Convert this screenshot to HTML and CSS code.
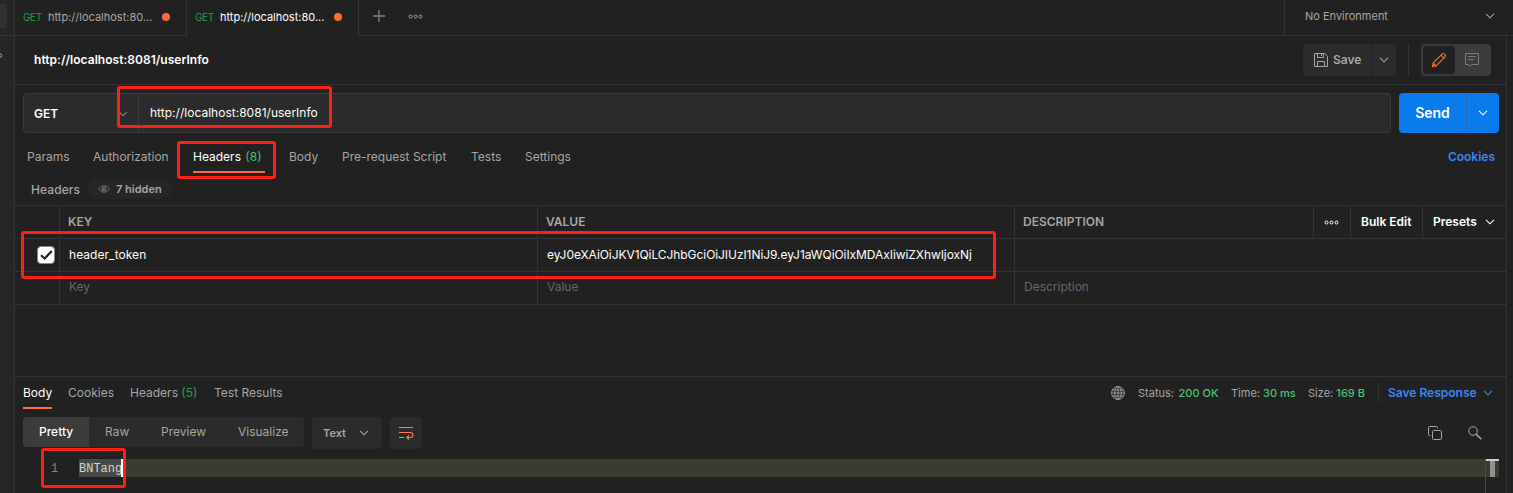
FILE: index.html
```
<!DOCTYPE html>
<html lang="en">
<head>
<meta charset="utf-8">
<title>userInfo request</title>
<link rel="stylesheet" href="styles.css">
</head>
<body>
<svg class="defs" width="0" height="0">
  <symbol id="chevron" viewBox="0 0 10 6"><path d="M1 .8 5 4.8 9 .8" fill="none" stroke="currentColor" stroke-width="1.1"/></symbol>
  <symbol id="dots" viewBox="0 0 15 5"><g fill="none" stroke="currentColor"><circle cx="2.5" cy="2.5" r="1.5"/><circle cx="7.5" cy="2.5" r="1.5"/><circle cx="12.5" cy="2.5" r="1.5"/></g></symbol>
</svg>
<div class="app">
  <aside class="rail"><div class="rail-top"><div class="rail-button"></div></div><svg class="rail-dot" width="3" height="5" viewBox="0 0 3 5"><circle cx="0" cy="2.5" r="1.7" fill="none" stroke="#a6a6a6"/></svg></aside>
  <header class="topbar">
    <div class="file-tab"><span class="verb">GET</span><span class="file-name">http://localhost:80...</span><i class="unsaved"></i></div>
    <div class="file-tab active"><span class="verb">GET</span><span class="file-name">http://localhost:80...</span><i class="unsaved"></i></div>
    <div class="tab-tools">
      <svg width="12" height="12" viewBox="0 0 12 12"><path d="M6 0v12M0 6h12" stroke="#858585" stroke-width="1.3"/></svg>
      <svg class="more" width="15" height="5"><use href="#dots"/></svg>
    </div>
    <div class="environment"><span>No Environment</span><svg width="10" height="6"><use href="#chevron"/></svg></div>
  </header>
  <main class="workspace">
    <section class="title-row">
      <h1 class="title">http://localhost:8081/userInfo</h1>
      <div class="save"><svg width="14" height="14" viewBox="0 0 14 14" fill="none" stroke="currentColor"><path d="M.5.5h10.2l2.8 2.8v10.2H.5zM3.5.5v4h6v-4M7.5 1v2M3.5 13.5v-5h7v5"/></svg><span class="save-label">Save</span></div>
      <div class="save-menu"><svg width="10" height="6"><use href="#chevron"/></svg></div>
      <div class="rule"></div>
      <div class="mode">
        <div class="mode-edit"><svg width="14" height="14" viewBox="0 0 14 14" fill="none" stroke="#ff6c37" stroke-width="1.1"><path d="M.5 13.5 1.1 10 10.2.9Q11.6 0 12.8 1.2 14 2.4 13.1 3.8L4 12.9ZM9 2.1 11.9 5M1.1 10 4 12.9"/></svg></div>
        <div class="mode-comment"><svg width="14" height="14" viewBox="0 0 14 14" fill="none" stroke="#7a7a7a"><path d="M.5.5h13v11H6.5L5 13.2 3.5 11.5H.5zM3 3.5h8M3 6.5h6"/></svg></div>
      </div>
    </section>
    <section class="url-row">
      <div class="url-box">
        <div class="method"><span>GET</span><svg width="10" height="6"><use href="#chevron"/></svg></div>
        <div class="url">http://localhost:8081/userInfo</div>
      </div>
      <div class="send"><div class="send-label"><span>Send</span></div><div class="send-menu"><svg width="10" height="6"><use href="#chevron"/></svg></div></div>
    </section>
    <nav class="request-tabs">
      <span class="t-params">Params</span><span class="t-auth">Authorization</span><span class="t-headers active">Headers <b class="count">(8)</b></span><span class="t-body">Body</span><span class="t-pre">Pre-request Script</span><span class="t-tests">Tests</span><span class="t-settings">Settings</span>
      <span class="cookies">Cookies</span>
    </nav>
    <div class="headers-row"><span class="headers-label">Headers</span>
      <div class="hidden-pill"><svg width="12" height="8" viewBox="0 0 12 8"><path d="M.4 4Q3 .6 6 .6T11.6 4Q9 7.4 6 7.4T.4 4Z" fill="none" stroke="#6b6b6b"/><circle cx="6" cy="4" r="2.5" fill="#6b6b6b"/><path d="M6 2.5V4h1.5" fill="none" stroke="#262626" stroke-width=".8"/></svg><span>7 hidden</span></div>
    </div>
    <div class="table">
      <div class="row head"><div></div><div>KEY</div><div>VALUE</div><div class="description"><span>DESCRIPTION</span></div><div class="head-tool"><svg width="15" height="5"><use href="#dots"/></svg></div><div class="head-tool">Bulk Edit</div><div class="head-tool presets"><span>Presets</span><svg width="10" height="6"><use href="#chevron"/></svg></div></div>
      <div class="row filled"><div class="check-cell"><span class="checkbox"><svg width="13" height="10" viewBox="0 0 13 10"><path d="M1 5.2 4.7 8.5 11.8 1" fill="none" stroke="#212121" stroke-width="2.2"/></svg></span></div><div><span class="key-text">header_token</span></div><div><span class="token">eyJ0eXAiOiJKV1QiLCJhbGciOiJIUzI1NiJ9.eyJ1aWQiOiIxMDAxIiwiZXhwIjoxNj</span></div><div></div></div>
      <div class="row blank"><div></div><div>Key</div><div>Value</div><div>Description</div></div>
    </div>
    <section class="response">
      <div class="response-bar">
        <span class="r-body active">Body</span><span class="r-cookies">Cookies</span><span class="r-headers">Headers <b class="count">(5)</b></span><span class="r-tests">Test Results</span>
        <div class="meta">
          <svg class="globe" width="14" height="14" viewBox="0 0 14 14" fill="none" stroke="#a6a6a6" stroke-width=".9"><circle cx="7" cy="7" r="6.4"/><ellipse cx="7" cy="7" rx="3.3" ry="6.4"/><path d="M7 .6v12.8M1.4 4h11.2M.6 7h12.8M1.4 10h11.2"/></svg>
          <span class="m-status">Status: <em>200 OK</em></span><span class="m-time">Time: <em>30 ms</em></span><span class="m-size">Size: <em>169 B</em></span>
          <div class="save-response"><span>Save Response</span><svg width="10" height="6"><use href="#chevron"/></svg></div>
        </div>
      </div>
      <div class="format-bar">
        <div class="segments"><span class="segment s-pretty active">Pretty</span><span class="segment s-raw">Raw</span><span class="segment s-preview">Preview</span><span class="segment s-visual">Visualize</span></div>
        <div class="language"><span>Text</span><svg width="10" height="6"><use href="#chevron"/></svg></div>
        <div class="wrap"><svg width="15" height="14" viewBox="0 0 15 14" fill="none" stroke="#ff7f52" stroke-width="1.1"><path d="M0 1.5h14M0 6.5h11.4a2.5 2.5 0 0 1 0 5H8M0 11.5h5M10 9.3 7.8 11.5 10 13.7"/></svg></div>
        <svg class="copy" width="14" height="14" viewBox="0 0 14 14" fill="none" stroke="#a6a6a6"><path d="M2.5 9.5H1.5a1 1 0 0 1-1-1v-7a1 1 0 0 1 1-1h7a1 1 0 0 1 1 1v1"/><rect x="4.5" y="4.5" width="9" height="9" rx="1"/></svg>
        <svg class="search" width="14" height="14" viewBox="0 0 14 14" fill="none" stroke="#a6a6a6"><circle cx="5" cy="5" r="4.3"/><path d="m8 8 5.3 5.3" stroke-width="1.6"/></svg>
      </div>
      <div class="editor"><span class="line-number">1</span><div class="line"><span class="selection">BNTang</span><i class="caret"></i></div><div class="minimap"><i class="minimap-top"></i><i class="minimap-thumb"></i></div></div>
    </section>
  </main>
  <aside class="right-rail"></aside>
</div>
<div class="mark mark-url"></div><div class="mark mark-headers"></div><div class="mark mark-token"></div><div class="mark mark-result"></div>
</body>
</html>
```
FILE: styles.css
```
* { box-sizing: border-box; }
body { margin: 0; width: 1513px; height: 493px; overflow: hidden; background: #212121; color: #a6a6a6; font: 12px/16px Inter, "Liberation Sans", sans-serif; white-space: nowrap; }
svg { display: block; flex: none; overflow: visible; }
.defs { position: absolute; }
.app { display: grid; grid-template: 36px 457px / 15px 1491px 7px; }

.rail { grid-row: 1 / 3; background: #262626; border-right: 1px solid #333; }
.rail-top { height: 36px; padding-top: 4px; border-bottom: 1px solid #333; }
.rail-button { width: 7px; height: 24px; background: #303030; border-radius: 0 3px 3px 0; }
.rail-dot { margin-top: 17px; }
.right-rail { border-left: 1px solid #333; }

.topbar { grid-column: 2 / 4; display: flex; }
.file-tab { width: 172px; display: flex; align-items: center; padding: 0 16px 2px 8px; border-right: 1px solid #333; border-bottom: 1px solid #333; }
.file-tab.active { border-bottom: 0; color: #fff; padding-bottom: 3px; }
.verb { width: 25px; font-size: 10px; letter-spacing: -.4px; color: #1aa54a; }
.file-name { width: 114px; font-size: 11px; }
.unsaved { width: 8px; height: 8px; border-radius: 50%; background: #ff6c37; }
.tab-tools { flex: 1; display: flex; align-items: center; padding: 0 0 3px 14px; border-bottom: 1px solid #333; }
.more { margin-left: 23px; }
.environment { width: 229px; display: flex; align-items: center; justify-content: space-between; padding: 0 18px 3px 20px; border-left: 1px solid #333; border-bottom: 1px solid #333; font-size: 11px; }

.workspace { display: grid; grid-template-rows: 49px 57px 31px 32px 100px 188px; }
.title-row { display: flex; align-items: center; padding: 0 15px 0 19px; border-bottom: 1px solid #333; }
.title { margin: 0 auto 0 0; color: #fff; font-size: 12px; font-weight: 600; letter-spacing: .03px; }
.save { width: 68px; height: 32px; display: flex; align-items: center; gap: 5px; padding-left: 11px; background: #2b2b2b; border-radius: 4px 0 0 4px; font-weight: 600; }
.save-menu { width: 24px; height: 32px; margin-left: 1px; display: grid; place-items: center; background: #2b2b2b; border-radius: 0 4px 4px 0; }
.rule { width: 1px; height: 32px; margin: 0 12px; background: #333; }
.mode { width: 70px; height: 32px; padding: 2px; display: flex; background: #3b3b3b; border-radius: 4px; }
.mode-edit { width: 32px; display: grid; place-items: center; background: #212121; border-radius: 4px; }
.mode-comment { flex: 1; display: grid; place-items: center; }

.url-row { display: flex; gap: 8px; padding: 8px 7px 9px 8px; color: #fff; }
.url-box { width: 1368px; display: flex; background: #2b2b2b; border: 1px solid #3b3b3b; border-radius: 4px; }
.method { width: 115px; display: flex; align-items: center; justify-content: space-between; padding: 1px 10px 0; border-right: 1px solid #3b3b3b; font-weight: 600; }
.method svg { color: #858585; }
.url { padding: 11px; letter-spacing: .02px; }
.send { width: 100px; display: flex; background: #097bed; border-radius: 4px; }
.send-label { width: 68px; display: grid; place-items: center; border-right: 1px solid #2668bb; font-size: 14px; font-weight: 600; }
.send-menu { flex: 1; display: grid; place-items: center; }

.request-tabs { display: flex; height: 32px; padding: 7px 11px 0 12px; }
.count { font-weight: 400; color: #47c575; }
.t-params { width: 66px; } .t-auth { width: 100px; } .t-headers { width: 72px; margin-right: 24px; } .t-body { width: 53px; } .t-pre { width: 129px; } .t-tests { width: 54px; }
.request-tabs .active { height: 24px; color: #fff; border-bottom: 2px solid #ff6c37; }
.t-headers .count { margin-left: 1px; }
.cookies { margin-left: auto; color: #3c86f4; font-weight: 600; }
.headers-row { display: flex; align-items: center; padding-left: 16px; font-weight: 500; }
.headers-label { width: 57px; padding-top: 1px; letter-spacing: .08px; }
.hidden-pill { width: 84px; height: 20px; display: flex; align-items: center; gap: 6px; padding-left: 10px; border-radius: 10px; background: #262626; font-size: 11px; font-weight: 600; }

.row { display: grid; grid-template-columns: 45px 478px 477px 491px; height: 33px; border-bottom: 1px solid #333; }
.row > div { display: flex; align-items: center; padding-left: 8px; border-right: 1px solid #333; }
.row > div:last-child { border-right: 0; }
.head { height: 34px; border-top: 1px solid #333; grid-template-columns: 45px 478px 477px 299px 37px 72px 83px; font-weight: 600; font-size: 12px; }
.row > .head-tool { color: #fff; padding-left: 10px; }
.row > .presets { gap: 8px; }
.filled { color: #fff; }
.row.filled > div { padding-left: 9px; }
.row.filled > .check-cell { padding-left: 22px; }
.key-text { letter-spacing: .05px; }
.token { letter-spacing: -.066px; }
.checkbox { width: 18px; height: 18px; display: grid; place-items: center; flex: none; background: #fff; border: 1px solid #858585; border-radius: 4px; }
.blank { color: #666; }
.row.blank > div { padding-left: 9px; padding-bottom: 2px; }

.response { margin-top: 71px; border-top: 1px solid #333; height: 117px; }
.response-bar { height: 32px; display: flex; padding: 8px 13px 0 8px; }
.response-bar .active { height: 24px; color: #fff; border-bottom: 2px solid #ff6c37; }
.r-body { width: 29px; margin-right: 16px; } .r-cookies { width: 62px; } .r-headers { width: 84px; }
.r-headers .count { color: #1aa54a; }
.meta { margin-left: auto; display: flex; font-size: 11px; }
.meta em { font-style: normal; font-weight: 500; color: #47c575; }
.globe { margin: 1px 13px 0 0; }
.m-status { width: 93px; } .m-time { width: 77px; } .m-size { width: 70px; }
.m-status em { margin-left: 1.5px; }
.save-response { width: 115px; height: 20px; margin-top: -2px; padding-left: 9px; display: flex; align-items: center; justify-content: space-between; border-left: 1px solid #333; color: #3c86f4; font-size: 12px; font-weight: 600; }
.format-bar { display: flex; padding: 8px 24px 0 8px; height: 50px; }
.segments { width: 281px; height: 30px; display: flex; background: #2b2b2b; border-radius: 4px; overflow: hidden; }
.segment { padding: 7px 0 0 16px; }
.segment.active { background: #3b3b3b; color: #fff; font-weight: 500; }
.s-pretty { width: 66px; } .s-raw { width: 56px; } .s-preview { width: 77px; }
.language { width: 70px; height: 32px; margin: 0 8px; padding: 0 13px 0 11px; display: flex; align-items: center; justify-content: space-between; background: #2b2b2b; border-radius: 4px; font-size: 11px; font-weight: 600; }
.wrap { width: 32px; height: 32px; display: grid; place-items: center; background: #2b2b2b; border-radius: 4px; }
.copy { margin: 9px 26px 0 auto; }
.search { margin-top: 9px; }
.editor { display: flex; height: 34px; font: 12px/20px "Liberation Mono", monospace; }
.line-number { width: 64px; padding-left: 36px; color: #858585; }
.line { width: 1406px; height: 18px; display: flex; background: #3c3b2f; }
.selection { width: 42px; background: #494949; color: #d4d4d4; }
.caret { width: 2px; background: #fff; }
.minimap { width: 14px; height: 34px; border-left: 1px solid #494949; display: grid; grid-template: 2px 16px / 1fr; justify-items: center; background: linear-gradient(#3c3b2f 18px, transparent 18px); }
.minimap-top { width: 13px; background: #ccc; }
.minimap-thumb { width: 5px; background: #919191; }

/* Callout frames drawn over the interface */
.mark { position: absolute; border: 3px solid #ff2015; border-radius: 3px; }
.mark-url { left: 117px; top: 86px; width: 215px; height: 42px; }
.mark-headers { left: 177px; top: 141px; width: 99px; height: 38px; }
.mark-token { left: 21px; top: 231px; width: 975px; height: 48px; }
.mark-result { left: 41px; top: 448px; width: 85px; height: 40px; }
```
